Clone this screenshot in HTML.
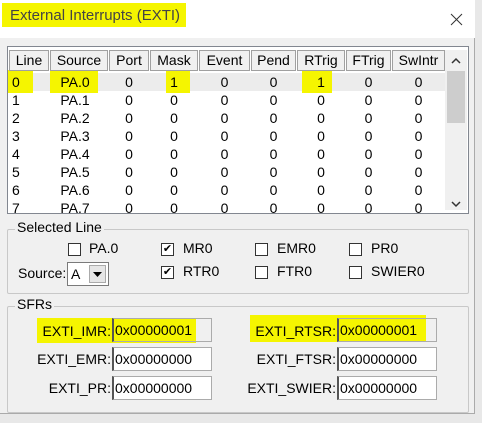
<!DOCTYPE html>
<html><head><style>
*{margin:0;padding:0;box-sizing:border-box}
body{width:482px;height:423px;background:#e8e8e8;font-family:"Liberation Sans",sans-serif;font-size:14px;color:#000;position:relative;overflow:hidden}
.a{position:absolute}
.dlg{left:0;top:0;width:475px;height:414px;background:#f0f0f0;border-right:1px solid #aaa;border-bottom:1px solid #aaa}
.title{left:0;top:0;width:475px;height:38px;background:#fff}
.hl{background:#f5f500}
.list{left:7px;top:46px;width:462px;height:168px;background:#fff;border:1px solid #828790}
.hd{top:3px;height:21px;border:1px solid #a0a0a0;background:#f0f0f0;text-align:center;line-height:19px;font-size:14px}
.cell{height:18px;line-height:18px;text-align:center}
.grp{border:1px solid #c8c8c8;border-radius:2px}
.gl{background:#f0f0f0;padding:0 2px;font-size:14px}
.cb{width:13px;height:13px;border:1px solid #333;background:#fff;font-size:11px;line-height:11px;text-align:center}
.inp{width:100px;height:24px;background:#fff;border:1px solid #ababab;border-left:2px solid #555;line-height:22px;padding-left:1px}
.lb{text-align:right;line-height:24px}
</style></head><body>
<div class="a dlg"></div>
<div class="a title"></div>
<div class="a hl" style="left:2px;top:3px;width:184px;height:24px"></div>
<div class="a" style="left:10px;top:7px;font-size:15px;color:#444">External Interrupts (EXTI)</div>
<svg class="a" style="left:450px;top:13px" width="13" height="13"><path d="M1 1L12 12M12 1L1 12" stroke="#333" stroke-width="1"/></svg>
<div class="a list">
 <div class="a" style="left:0;top:26px;width:438px;height:18px;background:#ececec"></div>
 <div class="a hl" style="left:0;top:23px;width:25px;height:23px"></div>
 <div class="a hl" style="left:42px;top:23px;width:48px;height:23px"></div>
 <div class="a hl" style="left:158px;top:20px;width:24px;height:26px"></div>
 <div class="a hl" style="left:294px;top:20px;width:30px;height:26px"></div>
 <div class="a" style="left:437px;top:3px;width:22px;height:160px;background:#f0f0f0"></div>
 <div class="a" style="left:439px;top:24px;width:18px;height:52px;background:#cdcdcd"></div>
 <svg class="a" style="left:443px;top:10px" width="10" height="8"><path d="M1 6L5 2L9 6" stroke="#333" stroke-width="1.5" fill="none"/></svg>
 <svg class="a" style="left:443px;top:153px" width="10" height="8"><path d="M1 2L5 6L9 2" stroke="#333" stroke-width="1.5" fill="none"/></svg>
 <div id="rows"></div>
</div>
<div class="a grp" style="left:7px;top:229px;width:462px;height:65px"></div>
<div class="a gl" style="left:15px;top:219px">Selected Line</div>
<div class="a cb" style="left:68px;top:243px"></div><div class="a" style="left:89px;top:240px">PA.0</div>
<div class="a cb" style="left:161px;top:243px">✔</div><div class="a" style="left:183px;top:240px">MR0</div>
<div class="a cb" style="left:255px;top:243px"></div><div class="a" style="left:277px;top:240px">EMR0</div>
<div class="a cb" style="left:349px;top:243px"></div><div class="a" style="left:371px;top:240px">PR0</div>
<div class="a" style="left:18px;top:265px">Source:</div>
<div class="a" style="left:67px;top:262px;width:42px;height:24px;border:1px solid #7a7a7a;background:#fff;padding-left:3px;line-height:22px">A</div>
<div class="a" style="left:89px;top:265px;width:17px;height:18px;background:#e6e6e6;border:1px solid #aaa"></div>
<svg class="a" style="left:93px;top:272px" width="9" height="5"><path d="M0 0H9L4.5 5Z" fill="#000"/></svg>
<div class="a cb" style="left:161px;top:266px">✔</div><div class="a" style="left:183px;top:263px">RTR0</div>
<div class="a cb" style="left:255px;top:266px"></div><div class="a" style="left:277px;top:263px">FTR0</div>
<div class="a cb" style="left:349px;top:266px"></div><div class="a" style="left:371px;top:263px">SWIER0</div>
<div class="a grp" style="left:7px;top:306px;width:462px;height:107px"></div>
<div class="a gl" style="left:15px;top:296px">SFRs</div>
<div class="a hl" style="left:37px;top:318px;width:159px;height:25px"></div>
<div class="a hl" style="left:250px;top:315px;width:176px;height:27px"></div>
<div class="a lb" style="left:20px;top:319px;width:91px">EXTI_IMR:</div>
<div class="a lb" style="left:20px;top:347px;width:91px">EXTI_EMR:</div>
<div class="a lb" style="left:20px;top:376px;width:91px">EXTI_PR:</div>
<div class="a inp" style="left:112px;top:318px;background:transparent">0x00000001</div>
<div class="a inp" style="left:112px;top:347px">0x00000000</div>
<div class="a inp" style="left:112px;top:376px">0x00000000</div>
<div class="a lb" style="left:220px;top:319px;width:116px">EXTI_RTSR:</div>
<div class="a lb" style="left:220px;top:347px;width:116px">EXTI_FTSR:</div>
<div class="a lb" style="left:220px;top:376px;width:116px">EXTI_SWIER:</div>
<div class="a inp" style="left:337px;top:318px;background:transparent">0x00000001</div>
<div class="a inp" style="left:337px;top:347px">0x00000000</div>
<div class="a inp" style="left:337px;top:376px">0x00000000</div>
<script>
var cols=[["Line",1,40],["Source",42,58],["Port",101,40],["Mask",142,48],["Event",191,51],["Pend",243,45],["RTrig",289,48],["FTrig",338,45],["SwIntr",384,53]];
var h="";
cols.forEach(function(c){h+='<div class="a hd" style="left:'+c[1]+'px;width:'+c[2]+'px">'+c[0]+'</div>';});
for(var r=0;r<8;r++){var t=26+r*18;
 cols.forEach(function(c,i){var v=i==0?r:i==1?"PA."+r:((r==0&&(i==3||i==6))?1:0);
 var al=i==0?"text-align:left;padding-left:3px;":"";
 var w=i==1?50:c[2];
 h+='<div class="a cell" style="'+al+'left:'+c[1]+'px;width:'+w+'px;top:'+t+'px">'+v+'</div>';});}
document.getElementById("rows").innerHTML=h;
</script>
</body></html>
